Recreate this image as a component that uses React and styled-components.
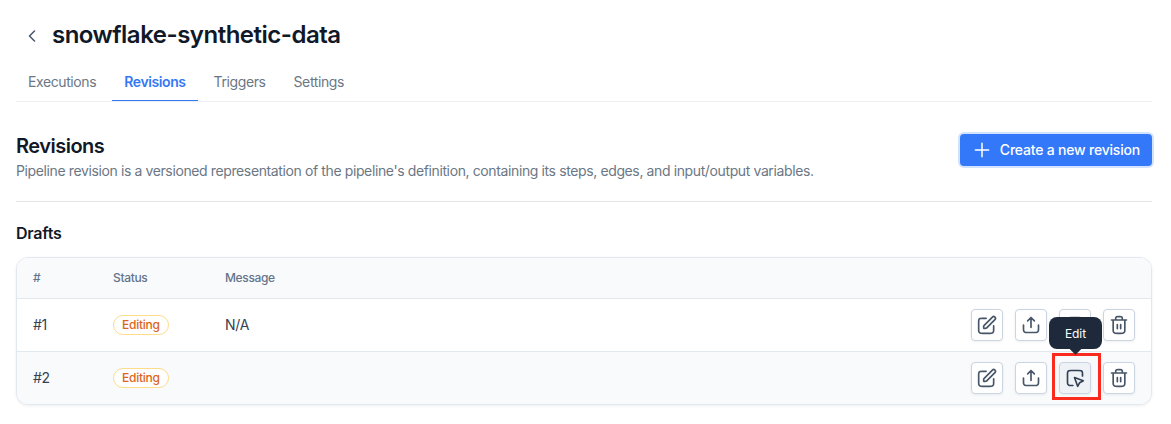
import React from "react";
import styled, { createGlobalStyle, css } from "styled-components";

const GlobalStyle = createGlobalStyle`
  *, *::before, *::after { box-sizing: border-box; }
  body { margin: 0; background: #fff; font-family: Inter, sans-serif; color: #111827; }
  h1, h2, h3, p { margin: 0; }
  button { font: inherit; cursor: pointer; }
`;

const Page = styled.main`
  height: 424px;
  padding: 16px 19px 0 16px;
  overflow: hidden;
`;

const Header = styled.header`
  display: flex;
  align-items: center;
  height: 38px;
`;

const BackButton = styled.button`
  display: flex;
  align-items: center;
  justify-content: center;
  width: 32px;
  height: 32px;
  margin-top: 2px;
  padding: 0;
  border: 0;
  background: none;
  color: #475569;
`;

const Title = styled.h1`
  margin-left: 4px;
  font-size: 24px;
  line-height: 32px;
  font-weight: 600;
  letter-spacing: -0.5px;
`;

const Tabs = styled.nav`
  display: flex;
  gap: 4px;
  height: 48px;
  border-bottom: 1px solid #eceef1;
`;

const Tab = styled.a`
  display: flex;
  align-items: center;
  height: 47px;
  padding: ${(p) => (p.$active ? "9px 12px 0" : "8px 12px 0")};
  border-bottom: ${(p) => (p.$active ? "1px solid #3478f6" : "0")};
  color: ${(p) => (p.$active ? "#3478f6" : "#6b7785")};
  font-size: 14px;
  line-height: 20px;
  letter-spacing: -0.4px;
  font-weight: ${(p) => (p.$active ? 600 : 400)};
`;

const SectionHeader = styled.section`
  display: flex;
  justify-content: space-between;
  align-items: flex-start;
  height: 100px;
  padding-top: 32px;
  border-bottom: 1px solid #e3e5e8;
`;

const SectionTitle = styled.h2`
  font-size: 20px;
  line-height: 24px;
  font-weight: 600;
  letter-spacing: -0.5px;
`;

const Description = styled.p`
  margin-top: 3px;
  color: #6b7785;
  font-size: 14px;
  line-height: 20px;
  letter-spacing: -0.383px;
`;

const PrimaryButton = styled.button`
  display: flex;
  align-items: center;
  gap: 8px;
  height: 32px;
  padding: 0 12px;
  border: 0;
  border-radius: 4px;
  background: #3478fa;
  box-shadow: 0 0 0 2px #d3e2fe;
  color: #fff;
  font-size: 14px;
  font-weight: 500;
  letter-spacing: -0.2px;
  line-height: 20px;
  white-space: nowrap;
`;

const ButtonLabel = styled.span`
  padding-bottom: 1px;
`;

const DraftsTitle = styled.h3`
  margin: 19px 0 12px;
  font-size: 16px;
  line-height: 24px;
  font-weight: 600;
  letter-spacing: -0.2px;
`;

const Table = styled.div`
  border: 1px solid #e2e8f0;
  border-radius: 12px;
  background: #fff;
  box-shadow: 0 1px 3px rgba(15, 23, 42, 0.07);
`;

const Row = styled.div`
  display: grid;
  grid-template-columns: 80px 112px 1fr auto;
  align-items: center;
  height: 53px;
  padding: 0 16px;
  border-bottom: 1px solid #e2e8f0;
  color: #374151;
  font-size: 14px;
  letter-spacing: -0.3px;

  &:last-child {
    height: 52px;
    border-bottom: 0;
    border-radius: 0 0 11px 11px;
    background: #f8fafc;
  }
`;

const HeadRow = styled(Row)`
  height: 41px;
  border-radius: 11px 11px 0 0;
  background: #f8fafc;
  color: #64748b;
  font-size: 12px;
  font-weight: 500;
  letter-spacing: -0.35px;
`;

const Cell = styled.span`
  line-height: 20px;
  padding-bottom: 1px;
`;

const Badge = styled.span`
  display: inline-flex;
  align-items: center;
  height: 20px;
  padding: 0 8px;
  border: 1px solid #fddc8b;
  border-radius: 10px;
  background: #fff;
  color: #dc6520;
  font-size: 12px;
  font-weight: 500;
  line-height: 18px;
  letter-spacing: -0.25px;
  vertical-align: middle;
`;

const Actions = styled.div`
  display: flex;
  gap: 12px;
`;

const IconButton = styled.button`
  display: flex;
  align-items: center;
  justify-content: center;
  width: 32px;
  height: 32px;
  padding: 0;
  border: 1px solid #cbd5e1;
  border-radius: 4px;
  background: #fff;
  color: #475569;
  box-shadow: 0 1px 3px rgba(15, 23, 42, 0.07);

  ${(p) => p.$hovered && css`
    background: #eef2f7;
    color: #334155;
  `}
`;

const ActionSlot = styled.div`
  position: relative;
`;

const Highlight = styled.div`
  position: absolute;
  top: -9px;
  left: -7px;
  width: 49px;
  height: 47px;
  border: 3px solid #fa2a1e;
`;

const Tooltip = styled.div`
  position: absolute;
  left: -10px;
  top: -45px;
  z-index: 2;
  width: 53px;
  height: 32px;
  border-radius: 8px;
  background: #1e293b;
  color: #fff;
  font-size: 12px;
  line-height: 33px;
  letter-spacing: -0.1px;
  text-align: center;

  &::after {
    content: "";
    position: absolute;
    left: 22px;
    bottom: -4px;
    width: 9px;
    height: 9px;
    background: #1e293b;
    transform: rotate(45deg);
  }
`;

const PATHS = {
  edit: "M11 4H6.8C5.12 4 4.28 4 3.638 4.327A3 3 0 0 0 2.327 5.638C2 6.28 2 7.12 2 8.8V17.2C2 18.88 2 19.72 2.327 20.362A3 3 0 0 0 3.638 21.673C4.28 22 5.12 22 6.8 22H15.2C16.88 22 17.72 22 18.362 21.673A3 3 0 0 0 19.673 20.362C20 19.72 20 18.88 20 17.2V13M8 16H9.675C10.164 16 10.408 16 10.639 15.945C10.843 15.896 11.038 15.815 11.217 15.705C11.418 15.582 11.591 15.409 11.937 15.063L21.5 5.5A2.121 2.121 0 0 0 18.5 2.5L8.937 12.063C8.591 12.409 8.418 12.582 8.295 12.783C8.185 12.962 8.104 13.157 8.055 13.362C8 13.592 8 13.836 8 14.326V16Z",
  publish: "M21 12V16.2C21 17.88 21 18.72 20.673 19.362A3 3 0 0 1 19.362 20.673C18.72 21 17.88 21 16.2 21H7.8C6.12 21 5.28 21 4.638 20.673A3 3 0 0 1 3.327 19.362C3 18.72 3 17.88 3 16.2V12M16 7L12 3M12 3L8 7M12 3V15",
  select: "M21 9.5V7.8C21 6.12 21 5.28 20.673 4.638A3 3 0 0 0 19.362 3.327C18.72 3 17.88 3 16.2 3H7.8C6.12 3 5.28 3 4.638 3.327A3 3 0 0 0 3.327 4.638C3 5.28 3 6.12 3 7.8V16.2C3 17.88 3 18.72 3.327 19.362A3 3 0 0 0 4.638 20.673C5.28 21 6.12 21 7.8 21H9.5M11.4 11.4L22 15.2L17.6 17.6L15.2 22L11.4 11.4Z",
  trash: "M16 6V5.2C16 4.08 16 3.52 15.782 3.092A2 2 0 0 0 14.908 2.218C14.48 2 13.92 2 12.8 2H11.2C10.08 2 9.52 2 9.092 2.218A2 2 0 0 0 8.218 3.092C8 3.52 8 4.08 8 5.2V6M10 11.5V16.5M14 11.5V16.5M3 6H21M19 6V17.2C19 18.88 19 19.72 18.673 20.362A3 3 0 0 1 17.362 21.673C16.72 22 15.88 22 14.2 22H9.8C8.12 22 7.28 22 6.638 21.673A3 3 0 0 1 5.327 20.362C5 19.72 5 18.88 5 17.2V6",
  plus: "M12 4V20M4 12H20",
  chevron: "M15 18L9 12L15 6",
};

function Icon({ name, size = 20, stroke = 2 }) {
  return (
    <svg width={size} height={size} viewBox="0 0 24 24" fill="none" stroke="currentColor"
      strokeWidth={stroke} strokeLinecap="round" strokeLinejoin="round" aria-hidden="true">
      <path d={PATHS[name]} />
    </svg>
  );
}

function RowActions({ hovered }) {
  return (
    <Actions>
      <IconButton><Icon name="edit" /></IconButton>
      <IconButton><Icon name="publish" /></IconButton>
      <ActionSlot>
        <IconButton $hovered={hovered}><Icon name="select" /></IconButton>
        {hovered && <Highlight />}
        {hovered && <Tooltip role="tooltip">Edit</Tooltip>}
      </ActionSlot>
      <IconButton><Icon name="trash" /></IconButton>
    </Actions>
  );
}

const TABS = ["Executions", "Revisions", "Triggers", "Settings"];
const DRAFTS = [
  { id: "#1", status: "Editing", message: "N/A" },
  { id: "#2", status: "Editing", message: "", hovered: true },
];

export default function App() {
  return (
    <>
      <GlobalStyle />
      <Page>
        <Header>
          <BackButton aria-label="Back"><Icon name="chevron" size={20} stroke={1.8} /></BackButton>
          <Title>snowflake-synthetic-data</Title>
        </Header>
        <Tabs>
          {TABS.map((tab) => <Tab key={tab} $active={tab === "Revisions"}>{tab}</Tab>)}
        </Tabs>
        <SectionHeader>
          <div>
            <SectionTitle>Revisions</SectionTitle>
            <Description>
              Pipeline revision is a versioned representation of the pipeline's definition, containing its steps, edges, and input/output variables.
            </Description>
          </div>
          <PrimaryButton>
            <Icon name="plus" size={20} stroke={1.8} />
            <ButtonLabel>Create a new revision</ButtonLabel>
          </PrimaryButton>
        </SectionHeader>
        <DraftsTitle>Drafts</DraftsTitle>
        <Table>
          <HeadRow><Cell>#</Cell><Cell>Status</Cell><Cell>Message</Cell></HeadRow>
          {DRAFTS.map((d) => (
            <Row key={d.id}>
              <Cell>{d.id}</Cell>
              <div><Badge>{d.status}</Badge></div>
              <Cell>{d.message}</Cell>
              <RowActions hovered={d.hovered} />
            </Row>
          ))}
        </Table>
      </Page>
    </>
  );
}
